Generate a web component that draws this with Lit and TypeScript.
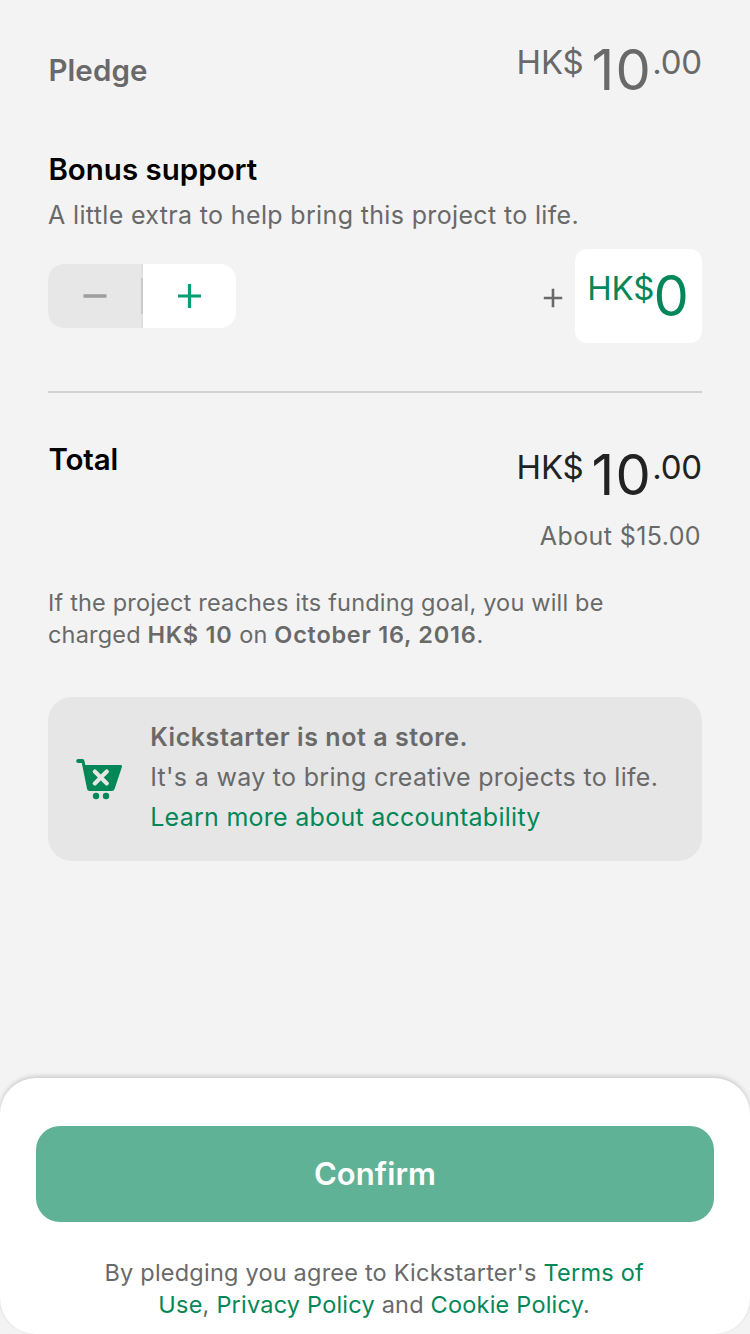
import { LitElement, html, css, svg, nothing } from "lit";
import { customElement, property, state } from "lit/decorators.js";

@customElement("money-amount")
export class MoneyAmount extends LitElement {
  static styles = css`
    :host {
      display: flex;
      align-items: flex-start;
      font-size: 33px;
      line-height: 48px;
      letter-spacing: -0.2px;
      white-space: nowrap;
    }
    .whole {
      font-size: 56px;
      line-height: 64px;
      letter-spacing: 1.3px;
      margin-left: 8px;
    }
    .compact {
      letter-spacing: 0;
      margin-left: -0.8px;
    }
  `;

  @property() currency = "";
  @property() whole = "";
  @property() cents = "";

  render() {
    return html`<span>${this.currency}</span
      ><span class="whole ${this.cents ? "" : "compact"}">${this.whole}</span
      >${this.cents ? html`<span>.${this.cents}</span>` : nothing}`;
  }
}

@customElement("pledge-stepper")
export class PledgeStepper extends LitElement {
  static styles = css`
    :host {
      display: flex;
      width: 188px;
      height: 64px;
      border-radius: 16px;
      overflow: hidden;
      background: #fff;
    }
    button {
      flex: 1;
      border: 0;
      padding: 0;
      display: flex;
      align-items: center;
      justify-content: center;
      background: #fff;
      color: #039e74;
    }
    button:disabled {
      background: #e7e7e7;
      color: #9c9e9d;
    }
    .rule {
      width: 2px;
      background: linear-gradient(#e0e0e0 14px, #c9c9c9 14px 50px, #e0e0e0 50px);
    }
  `;

  render() {
    return html`
      <button disabled aria-label="Decrease">
        <svg width="24" height="24" viewBox="0 0 24 24">
          <path d="M.5 12H23.5" stroke="currentColor" stroke-width="3.4" />
        </svg>
      </button>
      <span class="rule"></span>
      <button aria-label="Increase">
        <svg width="24" height="24" viewBox="0 0 24 24">
          <path d="M0 12H23M11.5 0V24" stroke="currentColor" stroke-width="3.2" />
        </svg>
      </button>
    `;
  }
}

const cartIcon = svg`
  <path d="M2.2 0H6.4Q8.2 0 8.5 1.9L9.3 6H44.4Q46.6 6 45.9 8L38.6 30Q37.9 32 35.9 32H13.4Q11.5 32 11.1 30L5.8 4H2.2Q.2 4 .2 2T2.2 0Z" fill="currentColor"/>
  <path d="M18.8 12.6L30.8 24.4M30.8 12.6L18.8 24.4" stroke="#e6e6e6" stroke-width="4.2" stroke-linecap="round"/>
  <circle cx="20" cy="37" r="3.2" fill="currentColor"/>
  <circle cx="30" cy="37" r="3.2" fill="currentColor"/>`;

@customElement("app-root")
export class AppRoot extends LitElement {
  static styles = css`
    :host {
      display: flex;
      flex-direction: column;
      box-sizing: border-box;
      width: 750px;
      height: 1334px;
      background: #f3f3f3;
      color: #696969;
      font-family: Inter, "Noto Sans", sans-serif;
      font-size: 25px;
      line-height: 40px;
      overflow: hidden;
    }
    main {
      flex: 1;
      padding: 38px 48px 0;
    }
    .row {
      display: flex;
      justify-content: space-between;
      align-items: flex-start;
    }
    h2 {
      margin: 0 0 0 0.4px;
      font-size: 29.5px;
      line-height: 38px;
      padding-bottom: 2px;
      font-weight: 600;
      letter-spacing: 0;
      white-space: nowrap;
    }
    .pledge {
      height: 112px;
    }
    .pledge h2 {
      margin-top: 13px;
      letter-spacing: 0.1px;
    }
    .dark {
      color: #000;
    }
    .hint {
      margin: 5px 0 0;
      letter-spacing: 0.348px;
      white-space: nowrap;
    }
    .bonus {
      display: flex;
      align-items: center;
      height: 94px;
      margin-top: 14px;
    }
    .plus {
      margin: 4px 12.4px 0 auto;
      width: 20px;
      height: 20px;
    }
    .field {
      box-sizing: border-box;
      width: 127px;
      height: 94px;
      padding: 15px 0 0 12.3px;
      border-radius: 12px;
      background: #fff;
      color: #028858;
    }
    .divider {
      height: 2px;
      margin: 48px 0 50px;
      background: #d1d1d1;
    }
    .total {
      height: 73px;
    }
    .total h2 {
      margin-top: -3px;
      letter-spacing: -0.1px;
    }
    .total money-amount {
      color: #222;
    }
    .about {
      text-align: right;
      letter-spacing: 0.4px;
      margin-right: 1px;
    }
    .charge {
      margin: 31px 0 0;
      font-size: 23.5px;
      line-height: 32px;
      letter-spacing: 0.18px;
      white-space: nowrap;
    }
    b {
      font-weight: 600;
      letter-spacing: 0.74px;
    }
    .notice {
      display: flex;
      align-items: center;
      box-sizing: border-box;
      height: 164px;
      margin-top: 46px;
      padding-left: 27.6px;
      border-radius: 24px;
      background: #e6e6e6;
      letter-spacing: 0.31px;
      white-space: nowrap;
    }
    .notice svg {
      flex: none;
      color: #028858;
    }
    .copy {
      margin: -4px 0 0 26.6px;
    }
    .copy b {
      letter-spacing: 0.56px;
    }
    .copy a {
      letter-spacing: 0.27px;
    }
    a {
      color: #028858;
      text-decoration: none;
    }
    footer {
      box-sizing: border-box;
      height: 256px;
      padding: 48px 36px 0;
      border-radius: 36px;
      background: #fff;
      box-shadow: 0 -2px 4px rgba(0, 0, 0, 0.16);
      text-align: center;
    }
    .confirm {
      display: block;
      width: 100%;
      height: 96px;
      border: 0;
      padding: 0;
      border-radius: 24px;
      background: #5fb295;
      color: #fff;
      font: 600 31px/96px Inter, "Noto Sans", sans-serif;
      letter-spacing: 0.1px;
    }
    .legal {
      margin: 35px 1.6px 0 0;
      font-size: 23.5px;
      line-height: 32px;
      letter-spacing: 0.21px;
      white-space: nowrap;
    }
  `;

  @state() private currency = "HK$";

  render() {
    return html`
      <main>
        <section class="row pledge">
          <h2>Pledge</h2>
          <money-amount currency=${this.currency} whole="10" cents="00"></money-amount>
        </section>

        <h2 class="dark">Bonus support</h2>
        <p class="hint">A little extra to help bring this project to life.</p>
        <div class="bonus">
          <pledge-stepper></pledge-stepper>
          <svg class="plus" viewBox="0 0 20 20">
            <path d="M.8 10H19.2M10 .8V19.2" stroke="#696969" stroke-width="2.6" />
          </svg>
          <div class="field">
            <money-amount currency=${this.currency} whole="0"></money-amount>
          </div>
        </div>

        <div class="divider"></div>

        <section class="row total">
          <h2 class="dark">Total</h2>
          <money-amount currency=${this.currency} whole="10" cents="00"></money-amount>
        </section>
        <div class="about">About $15.00</div>

        <p class="charge">
          If the project reaches its funding goal, you will be<br />charged
          <b>HK$ 10</b> on <b>October 16, 2016</b>.
        </p>

        <section class="notice">
          <svg width="48" height="41" viewBox="0 0 48 41">${cartIcon}</svg>
          <div class="copy">
            <b>Kickstarter is not a store.</b><br />
            It's a way to bring creative projects to life.<br />
            <a>Learn more about accountability</a>
          </div>
        </section>
      </main>

      <footer>
        <button class="confirm">Confirm</button>
        <p class="legal">
          By pledging you agree to Kickstarter's <a>Terms of<br />Use</a>,
          <a>Privacy Policy</a> and <a>Cookie Policy</a>.
        </p>
      </footer>
    `;
  }
}
